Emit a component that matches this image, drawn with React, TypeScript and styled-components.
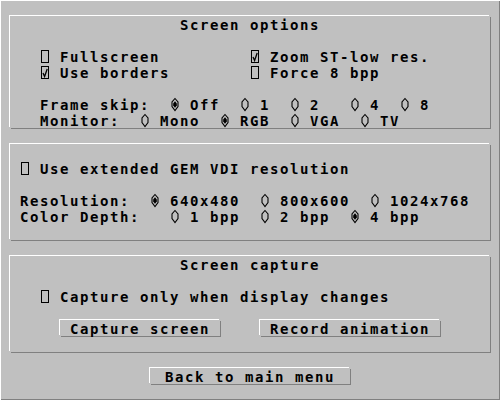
import styled, { createGlobalStyle } from "styled-components";

const GlobalStyle = createGlobalStyle`
  html, body {
    margin: 0;
    padding: 0;
    background: #c0c0c0;
  }
`;

const Dialog = styled.div`
  width: 500px;
  height: 400px;
  box-sizing: border-box;
  padding: 16px 10px;
  display: flex;
  flex-direction: column;
  gap: 16px;
  background: #c0c0c0;
  box-shadow: inset 1px 1px 0 #fff, inset -1px -1px 0 #808080;
  color: #000;
  font-family: "DejaVu Sans Mono", "Liberation Mono", monospace;
  font-weight: bold;
  font-size: 14px;
  line-height: 18px;
  letter-spacing: 1.571px;
`;

const Panel = styled.section<{ $rows: number }>`
  width: 480px;
  height: ${(p) => p.$rows * 16}px;
  flex-shrink: 0;
  display: flex;
  flex-direction: column;
  box-shadow: -1px -1px 0 #fff, 1px 1px 0 #808080;
`;

const Row = styled.div`
  height: 16px;
  flex-shrink: 0;
  display: grid;
  grid-template-columns: repeat(48, 10px);
  align-items: start;
  white-space: pre;
`;

const Title = styled.div`
  height: 16px;
  display: flex;
  justify-content: center;
  white-space: pre;
`;

const Item = styled.span<{ $col: number }>`
  grid-column-start: ${(p) => p.$col};
  justify-self: start;
  display: flex;
  align-items: flex-start;
  height: 16px;
`;

const Label = styled.span<{ $gap?: boolean }>`
  margin-left: ${(p) => (p.$gap ? 10 : 0)}px;
`;

const Glyph = styled.svg`
  display: block;
  width: 10px;
  height: 16px;
  flex-shrink: 0;
`;

const Button = styled.button<{ $col?: number; $span?: number }>`
  grid-column: ${(p) => (p.$col ? `${p.$col} / span ${p.$span}` : "auto")};
  width: ${(p) => (p.$span ?? 20) * 10}px;
  height: 16px;
  margin: 0;
  padding: 0;
  border: 0;
  background: #c0c0c0;
  box-shadow: -1px -1px 0 #fff, 1px 1px 0 #808080;
  display: flex;
  align-items: flex-start;
  justify-content: center;
  font: inherit;
  letter-spacing: inherit;
  color: inherit;
  white-space: pre;
`;

const BackButton = styled(Button)`
  align-self: center;
  flex-shrink: 0;
`;

function Checkbox({ col, label, checked }: { col: number; label: string; checked?: boolean }) {
  return (
    <Item $col={col}>
      <Glyph viewBox="0 0 10 16">
        <rect
          x="1.5"
          y="2.5"
          width="7"
          height="12"
          fill="none"
          stroke="#000"
          strokeWidth="1"
          shapeRendering="crispEdges"
        />
        {checked && <path d="M3 9 L4.6 12.5 L7.2 5" fill="none" stroke="#000" strokeWidth="1.3" />}
      </Glyph>
      <Label $gap>{label}</Label>
    </Item>
  );
}

function Radio({ col, label, on }: { col: number; label: string; on?: boolean }) {
  return (
    <Item $col={col}>
      <Glyph viewBox="0 0 10 16">
        <path
          d="M5 2.5 L8 6 L8 10.5 L5 14.5 L2 10.5 L2 6 Z"
          fill="none"
          stroke="#000"
          strokeWidth="1.1"
        />
        {on && <path d="M5 5.2 L6.8 7.6 L6.8 9.4 L5 11.8 L3.2 9.4 L3.2 7.6 Z" fill="#000" />}
      </Glyph>
      <Label $gap>{label}</Label>
    </Item>
  );
}

function Text({ col, children }: { col: number; children: string }) {
  return (
    <Item $col={col}>
      <Label>{children}</Label>
    </Item>
  );
}

export default function App() {
  return (
    <>
      <GlobalStyle />
      <Dialog>
        <Panel $rows={7}>
          <Title>Screen options</Title>
          <Row />
          <Row>
            <Checkbox col={4} label="Fullscreen" />
            <Checkbox col={25} label="Zoom ST-low res." checked />
          </Row>
          <Row>
            <Checkbox col={4} label="Use borders" checked />
            <Checkbox col={25} label="Force 8 bpp" />
          </Row>
          <Row />
          <Row>
            <Text col={4}>Frame skip:</Text>
            <Radio col={17} label="Off" on />
            <Radio col={24} label="1" />
            <Radio col={29} label="2" />
            <Radio col={35} label="4" />
            <Radio col={40} label="8" />
          </Row>
          <Row>
            <Text col={4}>Monitor:</Text>
            <Radio col={14} label="Mono" />
            <Radio col={22} label="RGB" on />
            <Radio col={29} label="VGA" />
            <Radio col={36} label="TV" />
          </Row>
        </Panel>

        <Panel $rows={6}>
          <Row />
          <Row>
            <Checkbox col={2} label="Use extended GEM VDI resolution" />
          </Row>
          <Row />
          <Row>
            <Text col={2}>Resolution:</Text>
            <Radio col={15} label="640x480" on />
            <Radio col={26} label="800x600" />
            <Radio col={37} label="1024x768" />
          </Row>
          <Row>
            <Text col={2}>Color Depth:</Text>
            <Radio col={17} label="1 bpp" />
            <Radio col={26} label="2 bpp" />
            <Radio col={35} label="4 bpp" on />
          </Row>
        </Panel>

        <Panel $rows={6}>
          <Title>Screen capture</Title>
          <Row />
          <Row>
            <Checkbox col={4} label="Capture only when display changes" />
          </Row>
          <Row />
          <Row>
            <Button $col={6} $span={16}>Capture screen</Button>
            <Button $col={26} $span={18}>Record animation</Button>
          </Row>
        </Panel>

        <BackButton $span={20}>Back to main menu</BackButton>
      </Dialog>
    </>
  );
}
